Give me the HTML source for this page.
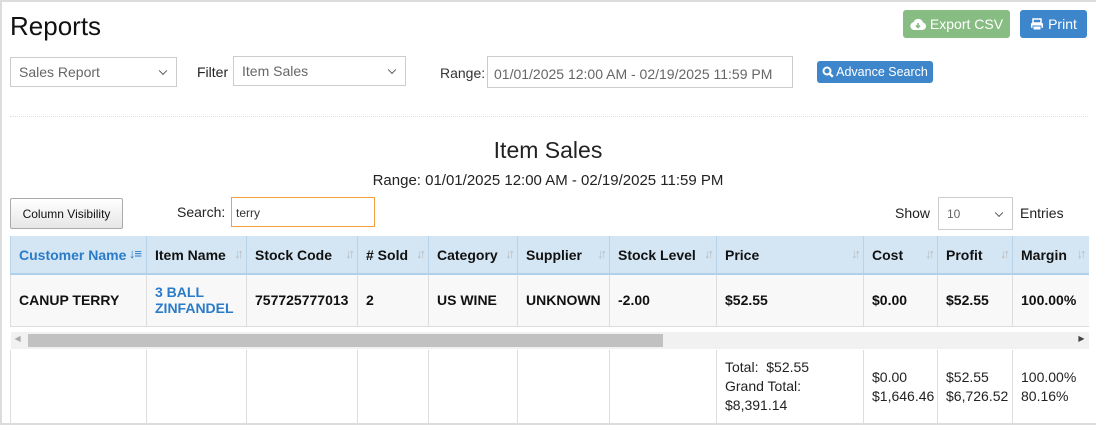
<!DOCTYPE html>
<html><head><meta charset="utf-8"><style>
*{box-sizing:border-box;margin:0;padding:0}
body{width:1096px;height:425px;overflow:hidden;background:#fff;font-family:"Liberation Sans",sans-serif;color:#222;position:relative}
.frame{position:absolute;left:0;top:0;width:1096px;height:425px;border:2px solid #dcdcdc;border-right:none}
.a{position:absolute}
.sel{position:absolute;border:1px solid #ccc;background:#fff;color:#666;font-size:14px;padding:0 8px;display:flex;align-items:center}
.sel:after{content:"";position:absolute;right:10px;top:50%;width:5px;height:5px;border-right:1.5px solid #555;border-bottom:1.5px solid #555;transform:translateY(-70%) rotate(45deg)}
.btn{position:absolute;color:#fff;font-size:13px;border-radius:3px;display:flex;align-items:center;justify-content:center;gap:4px}
table{position:absolute;left:10px;top:236px;width:1078px;border-collapse:collapse;font-size:14px;table-layout:fixed}
td,th{border-left:1px solid #ddd;padding:0 2px 0 8px;text-align:left;vertical-align:middle;white-space:nowrap;overflow:hidden}
th{background:#d4e6f3;height:38px;border-bottom:2px solid #aed0e8;border-left-color:#b7d4ea;position:relative;color:#111}
th .s{position:absolute;right:5px;top:10px;color:#bbb;font-size:13px;letter-spacing:-3px;font-weight:bold}
.b td{background:#f8f8f8;height:52px;font-weight:bold;border-bottom:1px solid #ddd;color:#111;white-space:normal}
.f td{height:73px;font-size:14px;line-height:19px;color:#222}
</style></head><body>
<div class="frame"></div>
<div class="a" style="left:10px;top:11px;font-size:26px;color:#111">Reports</div>
<div class="btn" style="left:903px;top:10px;width:107px;height:28px;background:#87bd82;font-size:14px"><svg width="16" height="13" viewBox="0 0 16 13"><path d="M4 12a4 4 0 0 1-.5-7.9A5 5 0 0 1 13 4.5 3.8 3.8 0 0 1 12.5 12z" fill="#fff"/><path d="M8 5v4M6 7.5l2 2 2-2" stroke="#87bd82" stroke-width="1.6" fill="none"/></svg>Export CSV</div>
<div class="btn" style="left:1020px;top:10px;width:67px;height:28px;background:#3d86cc;font-size:14px"><svg width="14" height="13" viewBox="0 0 14 13"><rect x="3" y="1" width="8" height="4" fill="none" stroke="#fff" stroke-width="1.5"/><rect x="1" y="5" width="12" height="5" rx="1" fill="#fff"/><rect x="3" y="8" width="8" height="4" fill="#fff" stroke="#3d86cc"/></svg>Print</div>
<div class="sel" style="left:10px;top:57px;width:167px;height:30px">Sales Report</div>
<div class="a" style="left:197px;top:64px;font-size:14px">Filter</div>
<div class="sel" style="left:233px;top:56px;width:173px;height:30px">Item Sales</div>
<div class="a" style="left:440px;top:65px;font-size:14px;color:#333">Range:</div>
<div class="a" style="left:487px;top:56px;width:306px;height:32px;border:1px solid #ccc;font-size:14px;color:#666;padding:9px 6px">01/01/2025 12:00 AM - 02/19/2025 11:59 PM</div>
<div class="btn" style="left:817px;top:61px;width:116px;height:22px;background:#3d86cc;font-size:12.5px;gap:2px"><svg width="12" height="12" viewBox="0 0 12 12"><circle cx="5" cy="5" r="3.5" fill="none" stroke="#fff" stroke-width="2"/><path d="M7.5 7.5l3.3 3.3" stroke="#fff" stroke-width="2.4"/></svg>Advance Search</div>
<div class="a" style="left:10px;top:116px;width:1078px;border-top:1px dotted #ddd"></div>
<div class="a" style="left:0;width:1096px;text-align:center;top:137px;font-size:23px;color:#222">Item Sales</div>
<div class="a" style="left:0;width:1096px;text-align:center;top:172px;font-size:15px;color:#222">Range: 01/01/2025 12:00 AM - 02/19/2025 11:59 PM</div>
<div class="a" style="left:10px;top:198px;width:113px;height:31px;border:1px solid #aaa;border-radius:2px;background:linear-gradient(#fff,#e6e6e6);font-size:12px;display:flex;align-items:center;justify-content:center;color:#111">Column Visibility</div>
<div class="a" style="left:177px;top:204px;font-size:14px">Search:</div>
<div class="a" style="left:231px;top:197px;width:144px;height:30px;border:1px solid #f0a040;font-size:12px;padding:8px 4px;color:#333">terry</div>
<div class="a" style="left:895px;top:205px;font-size:14px">Show</div>
<div class="sel" style="left:938px;top:197px;width:75px;height:33px;font-size:12px">10</div>
<div class="a" style="left:1020px;top:205px;font-size:14px">Entries</div>
<table>
<colgroup><col style="width:136px"><col style="width:100px"><col style="width:111px"><col style="width:71px"><col style="width:89px"><col style="width:92px"><col style="width:107px"><col style="width:147px"><col style="width:74px"><col style="width:75px"><col style="width:76px"></colgroup>
<tr><th style="color:#2a7bc8">Customer Name <span class="s" style="color:#2a7bc8;letter-spacing:-1px">↓≡</span></th><th>Item Name<span class="s">↓↑</span></th><th>Stock Code<span class="s">↓↑</span></th><th># Sold<span class="s">↓↑</span></th><th>Category<span class="s">↓↑</span></th><th>Supplier<span class="s">↓↑</span></th><th>Stock Level<span class="s">↓↑</span></th><th>Price<span class="s">↓↑</span></th><th>Cost<span class="s">↓↑</span></th><th>Profit<span class="s">↓↑</span></th><th>Margin<span class="s">↓↑</span></th></tr>
<tr class="b"><td>CANUP TERRY</td><td style="color:#2a7bc8">3 BALL ZINFANDEL</td><td>757725777013</td><td>2</td><td>US WINE</td><td>UNKNOWN</td><td>-2.00</td><td>$52.55</td><td>$0.00</td><td>$52.55</td><td>100.00%</td></tr>
<tr><td colspan="11" style="height:24px;border:none;position:relative;padding:0"><div style="position:absolute;left:0;right:0;top:5px;height:17px;background:#f1f1f1"><div style="position:absolute;left:17px;width:635px;top:2px;height:13px;background:#c1c1c1"></div><span style="position:absolute;left:4px;top:2px;font-size:8px;color:#aaa">◀</span><span style="position:absolute;right:4px;top:2px;font-size:8px;color:#444">▶</span></div></td></tr>
<tr class="f"><td></td><td></td><td></td><td></td><td></td><td></td><td></td><td>Total:&nbsp; $52.55<br>Grand Total:<br>$8,391.14</td><td>$0.00<br>$1,646.46</td><td>$52.55<br>$6,726.52</td><td>100.00%<br>80.16%</td></tr>
</table>
</body></html>
